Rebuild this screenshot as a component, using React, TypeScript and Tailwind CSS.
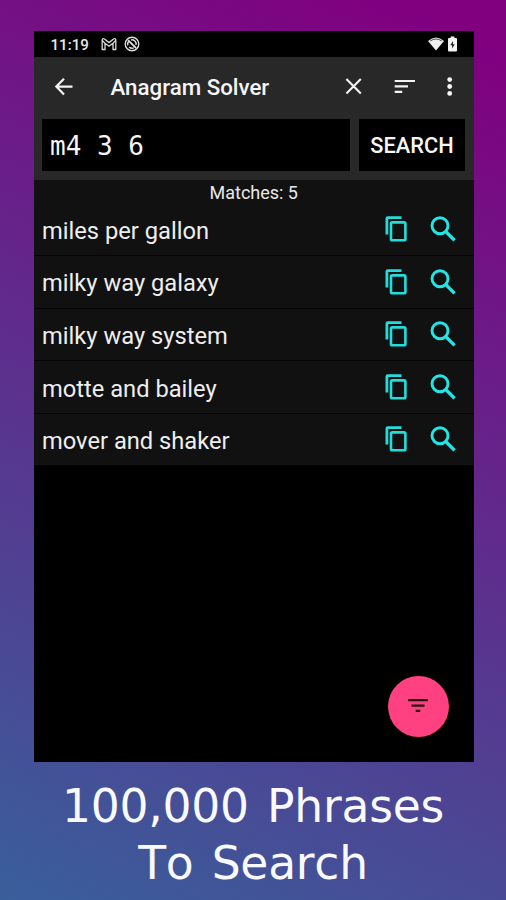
import React from "react";

const rows = [
  "miles per gallon",
  "milky way galaxy",
  "milky way system",
  "motte and bailey",
  "mover and shaker",
];

function CopyIcon() {
  return (
    <svg className="h-[28px] w-[24px] shrink-0" viewBox="0 0 24 28" fill="none" stroke="#24dcdc">
      <path d="M2.9 19.5V3.6Q2.9 2.7 3.8 2.7H17.5" strokeWidth="2.8" />
      <rect x="7" y="7.4" width="14.4" height="17.9" rx="1.4" strokeWidth="2.6" />
    </svg>
  );
}

function SearchIcon() {
  return (
    <svg className="h-[28px] w-[28px] shrink-0" viewBox="0 0 28 28" fill="none" stroke="#22e6e6">
      <circle cx="11" cy="10.7" r="8" strokeWidth="2.9" />
      <path d="M16.6 16.4l9 9" strokeWidth="3.4" />
    </svg>
  );
}

function MailIcon() {
  return (
    <svg className="h-[14px] w-[16px]" viewBox="0 0 16 14" fill="none" stroke="#dadada" strokeWidth="1.3">
      <path d="M1.2 12.5V3.2Q1.2.8 3.4 2L8 5.6 12.6 2Q14.8.8 14.8 3.2v9.3H12V6.2L8 9.2 4 6.2v6.3zM1.2 3.4L4 6.2M14.8 3.4L12 6.2" />
    </svg>
  );
}

function SyncIcon() {
  return (
    <svg className="h-[16px] w-[16px]" viewBox="0 0 16 16" fill="none" stroke="#dedede">
      <circle cx="8" cy="8" r="6.8" strokeWidth="1.4" />
      <path d="M3.8 9.2A4.3 4.3 0 0 1 5 5M7 3.9a4.2 4.2 0 0 1 5 5M9.8 11.9a4.2 4.2 0 0 1-4.6-1" strokeWidth="1.5" />
      <path d="M4 4.2l8 7.8" strokeWidth="1.8" />
    </svg>
  );
}

function StatusBar() {
  return (
    <div className="flex h-[26px] shrink-0 items-center bg-black pr-[17px] pl-[16.5px]">
      <span className="w-[50px] pt-[1px] text-[15.1px] leading-[26px] font-medium text-[#e8e8e8]">11:19</span>
      <MailIcon />
      <span className="ml-[7px]"><SyncIcon /></span>
      <svg className="ml-auto h-[14px] w-[16px]" viewBox="0 0 16 14">
        <path d="M0 4Q8-3 16 4L8 13.6Z" fill="#eeeeee" />
        <path d="M2.2 4q5.8-4 11.6 0" fill="none" stroke="#555555" />
      </svg>
      <svg className="ml-[4px] h-[16px] w-[9px]" viewBox="0 0 9 16">
        <path d="M1 2h1.6V.5h3.8V2H8q1 0 1 1v11.5q0 1-1 1H1q-1 0-1-1V3q0-1 1-1z" fill="#f2f2f2" />
        <path d="M5 5L2.3 9.3h1.8v3.2L6.8 8.2H5z" fill="#222222" />
      </svg>
    </div>
  );
}

function Toolbar() {
  return (
    <div className="flex h-[62px] shrink-0 items-center pb-[5px]">
      <svg className="ml-[20px] h-[20px] w-[20px]" viewBox="0 0 20 20" fill="none" stroke="#f3f3f3" strokeWidth="2.2">
        <path d="M18.5 10.6H2.5M10 2.7l-7.7 7.9 7.7 7.9" />
      </svg>
      <h1 className="ml-[36.5px] w-[233px] pt-[3px] text-[22.3px] leading-[26px] font-medium whitespace-nowrap text-[#f5f5f5]">
        Anagram Solver
      </h1>
      <svg className="h-[20px] w-[20px]" viewBox="0 0 20 20" fill="none" stroke="#f3f3f3" strokeWidth="2.1">
        <path d="M2.4 3l14.4 14.6M16.8 3L2.4 17.6" />
      </svg>
      <svg className="ml-[30px] h-[20px] w-[22px]" viewBox="0 0 22 20" fill="none" stroke="#f3f3f3" strokeWidth="2.2">
        <path d="M.7 5H21M.7 10.4H14M.7 15.8h7.5" />
      </svg>
      <svg className="ml-[28.5px] h-[20px] w-[12px]" viewBox="0 0 12 20" fill="#f5f5f5">
        <circle cx="5.7" cy="3.6" r="2.4" />
        <circle cx="5.7" cy="10.5" r="2.4" />
        <circle cx="5.7" cy="17.4" r="2.4" />
      </svg>
    </div>
  );
}

export default function App() {
  return (
    <main className="flex h-[900px] w-[506px] flex-col overflow-hidden bg-[linear-gradient(25deg,#395f9b_0%,#800080_95%)] pt-[31px] font-[Roboto,sans-serif]">
      <section className="relative ml-[34px] flex h-[730.5px] w-[439.5px] shrink-0 flex-col bg-black">
        <StatusBar />
        <header className="h-[123px] shrink-0 bg-[#282828]">
          <Toolbar />
          <div className="flex h-[52px] gap-[9px] pl-[8px]">
            <div className="h-[52px] w-[308px] bg-black pl-[8px] font-['DejaVu_Sans_Mono',monospace] text-[26px] leading-[55px] text-[#f5f5f5]">
              m4 3 6
            </div>
            <button className="h-[52px] w-[106px] bg-black text-center text-[21.8px] leading-[54px] font-medium text-[#f5f5f5]">
              SEARCH
            </button>
          </div>
        </header>
        <div className="h-[23.5px] shrink-0 bg-[#111111] text-center text-[18px] leading-[26px] text-[#e9e9e9]">
          Matches: 5
        </div>
        <ul className="shrink-0">
          {rows.map((text) => (
            <li key={text} className="flex h-[52.6px] items-center border-b border-[#050505] bg-[#111111] pl-[8px]">
              <span className="w-[342px] pt-[3px] text-[23.7px] leading-[30px] whitespace-nowrap text-[#eeeeee]">{text}</span>
              <div className="flex items-center gap-[21px] pb-[0.5px]">
                <CopyIcon />
                <SearchIcon />
              </div>
            </li>
          ))}
        </ul>
        <button className="absolute top-[645px] left-[354px] flex h-[60.5px] w-[60.5px] items-center justify-center rounded-full bg-[#ff4081]">
          <svg className="h-[14px] w-[20px]" viewBox="0 0 20 14" fill="#250b15">
            <path d="M0 0h19.8v2.3H0zM3.5 5.5h13v2.2h-13zM7.7 10.8h4.6V13H7.7z" />
          </svg>
        </button>
      </section>
      <p className="pt-[16px] text-center font-['DejaVu_Sans',sans-serif] text-[45.6px] leading-[57px] tracking-[-0.25px] [word-spacing:4px] whitespace-nowrap text-[#f8faff] [font-kerning:none]">
        100,000 Phrases
        <br />
        To Search
      </p>
    </main>
  );
}
